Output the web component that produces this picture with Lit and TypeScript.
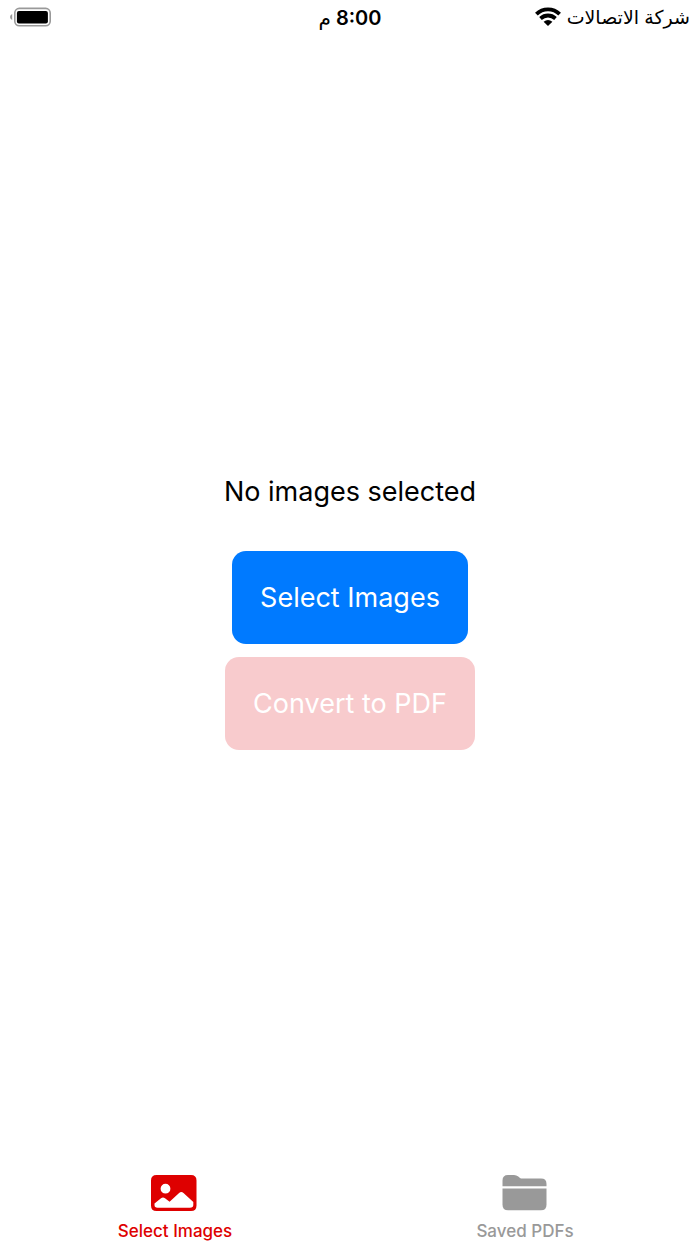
import { LitElement, html, css, svg } from "lit";
import { customElement, state } from "lit/decorators.js";
import { classMap } from "lit/directives/class-map.js";

type TabId = "select" | "saved";

const photoIcon = svg`
  <path fill="currentColor" fill-rule="evenodd" d="M5.500 0H40Q45.500 0 45.500 5.500V30.500Q45.500 36 40 36H5.500Q0 36 0 30.500V5.500Q0 0 5.500 0Z
    M14.500 8.800A4.900 4.900 0 1 0 14.500 18.600A4.900 4.900 0 1 0 14.500 8.800Z
    M3.500 28.500V30Q3.500 32.800 6.500 32.800H39Q42.300 32.800 42.300 30V27L32.500 18Q30.300 16.200 28.100 18L18.600 26.800L14 23.200Q12 21.700 10 23.200Z"/>`;

const folderIcon = svg`
  <path fill="currentColor" d="M1.500 11.300V5.500Q1.500 0 7 0H13Q15.500 0 17.300 1.600L18.700 2.700Q19.800 3.600 21.500 3.600H40Q45.500 3.600 45.500 9V11.300Z"/>
  <path fill="currentColor" d="M1.500 13.600H45.500V29.800Q45.500 35.300 40 35.300H7Q1.500 35.300 1.500 29.800Z"/>`;

@customElement("app-root")
export class AppRoot extends LitElement {
  static styles = css`
    :host {
      display: flex;
      flex-direction: column;
      min-height: 100vh;
      background: #fff;
      color: #000;
      font-family: Inter, "DejaVu Sans", sans-serif;
    }
    .status {
      display: grid;
      grid-template-columns: 1fr auto 1fr;
      align-items: center;
      height: 36px;
      padding: 0 10px;
      font-size: 20px;
      line-height: 24px;
    }
    .battery {
      display: block;
      justify-self: end;
      width: 41px;
      height: 22px;
    }
    .time {
      font-weight: 600;
    }
    .period {
      font-weight: 500;
    }
    .carrier {
      display: flex;
      align-items: center;
      justify-content: flex-start;
      gap: 6px;
      font-size: 19px;
    }
    .wifi {
      display: block;
      width: 26px;
      height: 22px;
    }
    main {
      flex: 1;
      display: flex;
      flex-direction: column;
      align-items: center;
      justify-content: center;
    }
    .message {
      margin: 0 0 5px;
      padding: 43px 0 37px;
      font-size: 27px;
      line-height: 34px;
    }
    .actions {
      display: flex;
      flex-direction: column;
      align-items: center;
      gap: 13px;
    }
    .action {
      border: 0;
      border-radius: 14px;
      padding: 30px 28px 29px;
      background: #007aff;
      color: #fff;
      font: inherit;
      font-size: 27px;
      line-height: 34px;
    }
    .convert:disabled {
      background: #f8cbcd;
    }
    .tabs {
      display: grid;
      grid-template-columns: 1fr 1fr;
    }
    .tab {
      display: flex;
      flex-direction: column;
      align-items: center;
      gap: 10px;
      padding: 29px 0 3px;
      border: 0;
      background: none;
      color: #999;
      font: inherit;
      font-size: 17px;
      font-weight: 500;
      line-height: 20px;
    }
    .tab.active {
      color: #de0000;
    }
    .tab-icon {
      display: block;
      width: 48px;
      height: 36px;
    }
  `;

  @state() private tab: TabId = "select";

  private renderTab(id: TabId, label: string, icon: unknown) {
    return html`<button
      class=${classMap({ tab: true, active: this.tab === id })}
      aria-current=${this.tab === id ? "page" : "false"}
      @click=${() => (this.tab = id)}
    >
      <svg class="tab-icon" viewBox="0 0 48 36" aria-hidden="true">${icon}</svg>
      <span>${label}</span>
    </button>`;
  }

  render() {
    return html`
      <header class="status" lang="ar" dir="rtl">
        <div class="carrier">
          <span>شركة الاتصالات</span>
          <svg class="wifi" viewBox="0 0 26 22" aria-hidden="true">
            <g fill="none" stroke="#000" stroke-width="3.800">
              <path d="M1.400 7.200Q6.200 2.300 13 2.300T24.600 7.200" />
              <path d="M5.500 11.500Q8.800 8.500 13 8.500T20.500 11.500" />
            </g>
            <path d="M13 19L8.600 14.700Q13 11.200 17.400 14.700Z" />
          </svg>
        </div>
        <span class="time">8:00 <span class="period">م</span></span>
        <svg class="battery" viewBox="0 0 41 22" aria-hidden="true">
          <path fill="#999" d="M2.200 7V13Q0 12 0 10T2.200 7Z" />
          <rect x="4.800" y="1.400" width="35.400" height="17.400" rx="4.500" fill="none" stroke="#999" stroke-width="1.600" />
          <rect x="6.900" y="4" width="31" height="12.400" rx="2" />
        </svg>
      </header>
      <main>
        <p class="message">No images selected</p>
        <div class="actions">
          <button class="action">Select Images</button>
          <button class="action convert" disabled>Convert to PDF</button>
        </div>
      </main>
      <nav class="tabs">
        ${this.renderTab("select", "Select Images", photoIcon)}
        ${this.renderTab("saved", "Saved PDFs", folderIcon)}
      </nav>
    `;
  }
}
